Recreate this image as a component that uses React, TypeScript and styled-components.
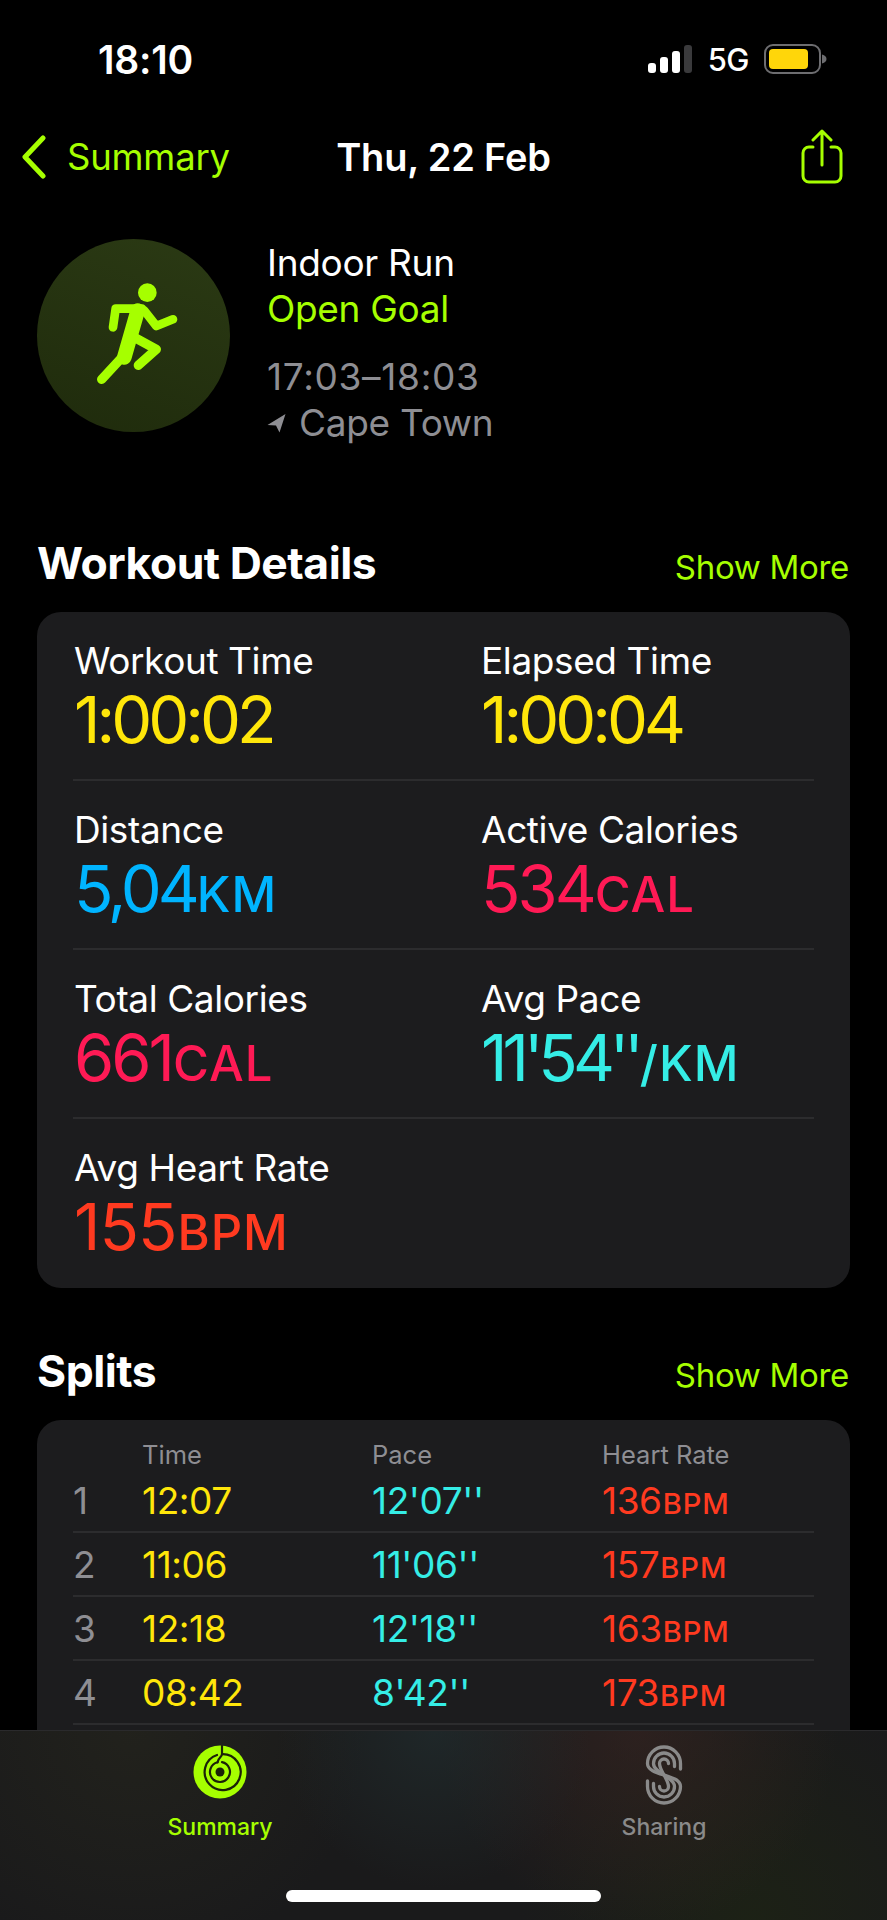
import React from 'react';
import styled, { createGlobalStyle } from 'styled-components';

const GlobalStyle = createGlobalStyle`
  html, body {
    margin: 0;
    padding: 0;
    background: #000;
    font-family: Inter, "Liberation Sans", sans-serif;
    -webkit-font-smoothing: antialiased;
  }
`;

const lime = '#a6ff00';
const yellow = '#ffe60a';
const blue = '#00b4ff';
const pink = '#ff1a55';
const cyan = '#35ede6';
const red = '#ff3a20';
const grey = '#8e8e93';

const Screen = styled.div`
  position: relative;
  width: 887px;
  height: 1920px;
  overflow: hidden;
  background: #000;
  color: #fff;
`;

const StatusBar = styled.div`
  display: flex;
  align-items: center;
  justify-content: space-between;
  height: 44px;
  padding: 37px 60px 0 98px;
`;

const Clock = styled.span`
  font-size: 39px;
  font-weight: 600;
  letter-spacing: -0.2px;
`;

const StatusIcons = styled.div`
  display: flex;
  align-items: center;
  gap: 15px;
`;

const Network = styled.span`
  font-size: 31px;
  font-weight: 500;
  letter-spacing: -0.5px;
`;

const NavBar = styled.div`
  display: grid;
  grid-template-columns: 1fr auto 1fr;
  align-items: center;
  height: 60px;
  margin-top: 46px;
  padding: 0 44px;
`;

const BackLink = styled.div`
  display: flex;
  align-items: center;
  gap: 21px;
  margin-left: -22px;
  color: ${lime};
  font-size: 36.5px;
  letter-spacing: -0.2px;
`;

const NavTitle = styled.div`
  font-size: 38px;
  font-weight: 600;
  letter-spacing: -0.2px;
`;

const NavAction = styled.div`
  display: flex;
  justify-content: flex-end;
`;

const Hero = styled.div`
  display: flex;
  align-items: flex-start;
  gap: 37px;
  margin-top: 52px;
  padding: 0 37px;
`;

const Badge = styled.div`
  flex: none;
  display: flex;
  width: 193px;
  height: 193px;
  border-radius: 50%;
  background: linear-gradient(20deg, #1f2b0c, #2b3a14);
`;

const HeroText = styled.div`
  display: flex;
  flex-direction: column;
  padding-top: 1px;
`;

const HeroLine = styled.div<{ $color?: string; $gap?: number; $tracking?: number }>`
  font-size: 37px;
  line-height: 46px;
  letter-spacing: ${(p) => p.$tracking ?? -0.3}px;
  color: ${(p) => p.$color ?? '#fff'};
  margin-top: ${(p) => p.$gap ?? 0}px;
  display: flex;
  align-items: center;
  gap: 13px;
`;

const SectionHead = styled.div<{ $top: number }>`
  display: flex;
  align-items: baseline;
  justify-content: space-between;
  margin-top: ${(p) => p.$top}px;
  padding: 0 38px 0 37px;
`;

const SectionTitle = styled.h2`
  margin: 0;
  font-size: 44.5px;
  line-height: 50px;
  font-weight: 700;
  letter-spacing: -0.5px;
`;

const ShowMore = styled.span`
  color: ${lime};
  font-size: 33px;
  letter-spacing: -0.3px;
`;

const Card = styled.div`
  margin: 24px 37px 0;
  padding: 0 36px;
  border-radius: 24px;
  background: #1c1c1e;
`;

const DetailGrid = styled.div`
  display: grid;
  grid-template-columns: 407px 1fr;
`;

const DetailCell = styled.div<{ $divided: boolean }>`
  height: 169px;
  padding: 28px 0 0 1px;
  box-sizing: border-box;
  border-bottom: ${(p) => (p.$divided ? '2px solid #2c2c2e' : 'none')};
`;

const DetailLabel = styled.div`
  font-size: 37px;
  line-height: 42px;
  letter-spacing: -0.4px;
`;

const DetailValue = styled.div<{ $color: string; $tracking: number }>`
  color: ${(p) => p.$color};
  font-size: 65px;
  line-height: 75px;
  letter-spacing: ${(p) => p.$tracking}px;
  white-space: nowrap;
`;

const Unit = styled.span<{ $size: number }>`
  font-size: ${(p) => p.$size}px;
  font-weight: 500;
  letter-spacing: 1px;
  margin-left: 1px;
`;

const SplitsCard = styled(Card)`
  height: 520px;
`;

const SplitsHeader = styled.div`
  display: grid;
  grid-template-columns: 69px 230px 230px 1fr;
  padding-top: 20px;
  height: 29px;
  color: ${grey};
  font-size: 25.5px;
  line-height: 29px;
`;

const SplitRow = styled.div`
  display: grid;
  grid-template-columns: 69px 230px 230px 1fr;
  align-items: center;
  height: 62px;
  border-bottom: 2px solid #2c2c2e;
  font-size: 37px;
  letter-spacing: -0.4px;
`;

const SplitCell = styled.span<{ $color: string }>`
  color: ${(p) => p.$color};
  white-space: nowrap;
`;

const TabBar = styled.div`
  position: absolute;
  left: 0;
  right: 0;
  bottom: 0;
  height: 189px;
  display: flex;
  border-top: 1px solid #2a2a2c;
  background:
    radial-gradient(circle at 49% 0%, rgba(35, 50, 52, 0.55), transparent 32%),
    radial-gradient(circle at 72% 0%, rgba(60, 38, 34, 0.55), transparent 30%),
    radial-gradient(circle at 85% 100%, rgba(30, 38, 18, 0.6), transparent 30%),
    radial-gradient(circle at 15% 0%, rgba(45, 45, 30, 0.4), transparent 30%),
    #1a1a1b;
`;

const Tab = styled.div<{ $color: string; $center: number }>`
  position: absolute;
  top: 14px;
  left: ${(p) => p.$center - 80}px;
  width: 160px;
  display: flex;
  flex-direction: column;
  align-items: center;
  color: ${(p) => p.$color};
  font-size: 23px;
  font-weight: 500;
`;

const TabIcon = styled.div`
  height: 60px;
  margin-bottom: 8px;
`;

const HomeBar = styled.div`
  position: absolute;
  left: 286px;
  bottom: 18px;
  width: 315px;
  height: 12px;
  border-radius: 6px;
  background: #fff;
`;

const SignalIcon = () => (
  <svg width="45" height="28" viewBox="0 0 45 28">
    <rect x="0" y="18" width="8" height="10" rx="3" fill="#fff" />
    <rect x="12" y="12" width="8" height="16" rx="3" fill="#fff" />
    <rect x="24" y="6" width="8" height="22" rx="3" fill="#fff" />
    <rect x="36" y="0" width="8" height="28" rx="3" fill="#3a3a3c" />
  </svg>
);

const BatteryIcon = () => (
  <svg width="63" height="30" viewBox="0 0 63 30">
    <rect x="1" y="1" width="55" height="28" rx="8" fill="none" stroke="#6d6d70" strokeWidth="2" />
    <rect x="5" y="5" width="39" height="20" rx="4" fill="#ffd60a" />
    <path d="M58 10.5c3 .8 4.500 2.500 4.500 4.500s-1.500 3.700-4.500 4.500z" fill="#6d6d70" />
  </svg>
);

const Chevron = () => (
  <svg width="24" height="44" viewBox="0 0 24 44">
    <path d="M21 3 3 22l18 19" fill="none" stroke={lime} strokeWidth="5" strokeLinecap="round" strokeLinejoin="round" />
  </svg>
);

const ShareIcon = () => (
  <svg width="42" height="56" viewBox="0 0 42 56">
    <path d="M12 18H8a6 6 0 0 0-6 6v23a6 6 0 0 0 6 6h26a6 6 0 0 0 6-6V24a6 6 0 0 0-6-6h-4" fill="none" stroke={lime} strokeWidth="3" strokeLinecap="round" />
    <path d="M21 36V2M12 11l9-9 9 9" fill="none" stroke={lime} strokeWidth="3" strokeLinecap="round" strokeLinejoin="round" />
  </svg>
);

const Runner = () => (
  <svg width="193" height="193" viewBox="110 57 579 579">
    <circle cx="441" cy="218" r="28" fill={lime} />
    <g fill="none" stroke={lime} strokeLinecap="round" strokeLinejoin="round">
      <path d="M425 266H346l-8 56" strokeWidth="26" />
      <path d="M432 272l36 46 50-20" strokeWidth="26" />
      <path d="M412 272 372 412" strokeWidth="44" />
      <path d="M398 350l70 38-54 48" strokeWidth="28" />
      <path d="M365 412l-61 66" strokeWidth="28" />
    </g>
  </svg>
);

const LocationArrow = () => (
  <svg width="19" height="20" viewBox="0 0 19 20">
    <path d="M18.500 1 0.500 12l8.500 .5L12.500 19.500z" fill={grey} />
  </svg>
);

const RingsIcon = () => (
  <svg width="54" height="54" viewBox="0 0 54 54">
    <circle cx="27" cy="27" r="26.500" fill={lime} />
    <g fill="none" stroke="#1b2208" strokeWidth="2.200" strokeLinecap="round">
      <path d="M24 10A18 18 0 1 0 29 9.100" />
      <path d="M24.500 17.300A10 10 0 1 0 29 17.200" />
      <path d="M29 1v8.100c0 3-4 4-4.500 8.200" />
    </g>
    <circle cx="27" cy="27" r="4.500" fill="#1b2208" />
  </svg>
);

const SharingIcon = () => (
  <svg width="38" height="60" viewBox="0 0 38 60">
    <g fill="none" stroke="#8a8a8a" strokeWidth="3.300" strokeLinecap="round">
      <path d="M35.500 24V18.500a16.500 16.500 0 0 0-33 0c0 13 33 10 33 23a16.500 16.500 0 0 1-33 0V36" />
      <path d="M29.500 21.500V18.500a10.500 10.500 0 0 0-21 0c0 10 21 13 21 23a10.500 10.500 0 0 1-21 0V38.500" />
      <path d="M23.500 18.500a4.500 4.500 0 0 0-9 0c0 7 9 16 9 23a4.500 4.500 0 0 1-9 0" />
    </g>
  </svg>
);

type Detail = { label: string; value: string; unit?: string; color: string; tracking: number };

const details: Detail[] = [
  { label: 'Workout Time', value: '1:00:02', color: yellow, tracking: -4 },
  { label: 'Elapsed Time', value: '1:00:04', color: yellow, tracking: -4 },
  { label: 'Distance', value: '5,04', unit: 'KM', color: blue, tracking: -4 },
  { label: 'Active Calories', value: '534', unit: 'CAL', color: pink, tracking: -3 },
  { label: 'Total Calories', value: '661', unit: 'CAL', color: pink, tracking: -3 },
  { label: 'Avg Pace', value: "11'54''", unit: '/KM', color: cyan, tracking: -5 },
  { label: 'Avg Heart Rate', value: '155', unit: 'BPM', color: red, tracking: -1 },
];

const splits = [
  { n: 1, time: '12:07', pace: "12'07''", hr: '136' },
  { n: 2, time: '11:06', pace: "11'06''", hr: '157' },
  { n: 3, time: '12:18', pace: "12'18''", hr: '163' },
  { n: 4, time: '08:42', pace: "8'42''", hr: '173' },
];

export default function App() {
  return (
    <Screen>
      <GlobalStyle />
      <StatusBar>
        <Clock>18:10</Clock>
        <StatusIcons>
          <SignalIcon />
          <Network>5G</Network>
          <BatteryIcon />
        </StatusIcons>
      </StatusBar>

      <NavBar>
        <BackLink>
          <Chevron />
          Summary
        </BackLink>
        <NavTitle>Thu, 22 Feb</NavTitle>
        <NavAction>
          <ShareIcon />
        </NavAction>
      </NavBar>

      <Hero>
        <Badge>
          <Runner />
        </Badge>
        <HeroText>
          <HeroLine>Indoor Run</HeroLine>
          <HeroLine $color={lime}>Open Goal</HeroLine>
          <HeroLine $color={grey} $gap={22} $tracking={0.7}>17:03–18:03</HeroLine>
          <HeroLine $color={grey}>
            <LocationArrow />
            Cape Town
          </HeroLine>
        </HeroText>
      </Hero>

      <SectionHead $top={92}>
        <SectionTitle>Workout Details</SectionTitle>
        <ShowMore>Show More</ShowMore>
      </SectionHead>
      <Card>
        <DetailGrid>
          {details.map((d, i) => (
            <DetailCell key={d.label} $divided={i < 6}>
              <DetailLabel>{d.label}</DetailLabel>
              <DetailValue $color={d.color} $tracking={d.tracking}>
                {d.value}
                {d.unit && <Unit $size={49}>{d.unit}</Unit>}
              </DetailValue>
            </DetailCell>
          ))}
        </DetailGrid>
      </Card>

      <SectionHead $top={58}>
        <SectionTitle>Splits</SectionTitle>
        <ShowMore>Show More</ShowMore>
      </SectionHead>
      <SplitsCard>
        <SplitsHeader>
          <span />
          <span>Time</span>
          <span>Pace</span>
          <span>Heart Rate</span>
        </SplitsHeader>
        {splits.map((s) => (
          <SplitRow key={s.n}>
            <SplitCell $color={grey}>{s.n}</SplitCell>
            <SplitCell $color={yellow}>{s.time}</SplitCell>
            <SplitCell $color={cyan}>{s.pace}</SplitCell>
            <SplitCell $color={red}>
              {s.hr}
              <Unit $size={29}>BPM</Unit>
            </SplitCell>
          </SplitRow>
        ))}
      </SplitsCard>

      <TabBar>
        <Tab $color={lime} $center={220}>
          <TabIcon>
            <RingsIcon />
          </TabIcon>
          Summary
        </Tab>
        <Tab $color="#8a8a8a" $center={664}>
          <TabIcon>
            <SharingIcon />
          </TabIcon>
          Sharing
        </Tab>
        <HomeBar />
      </TabBar>
    </Screen>
  );
}
